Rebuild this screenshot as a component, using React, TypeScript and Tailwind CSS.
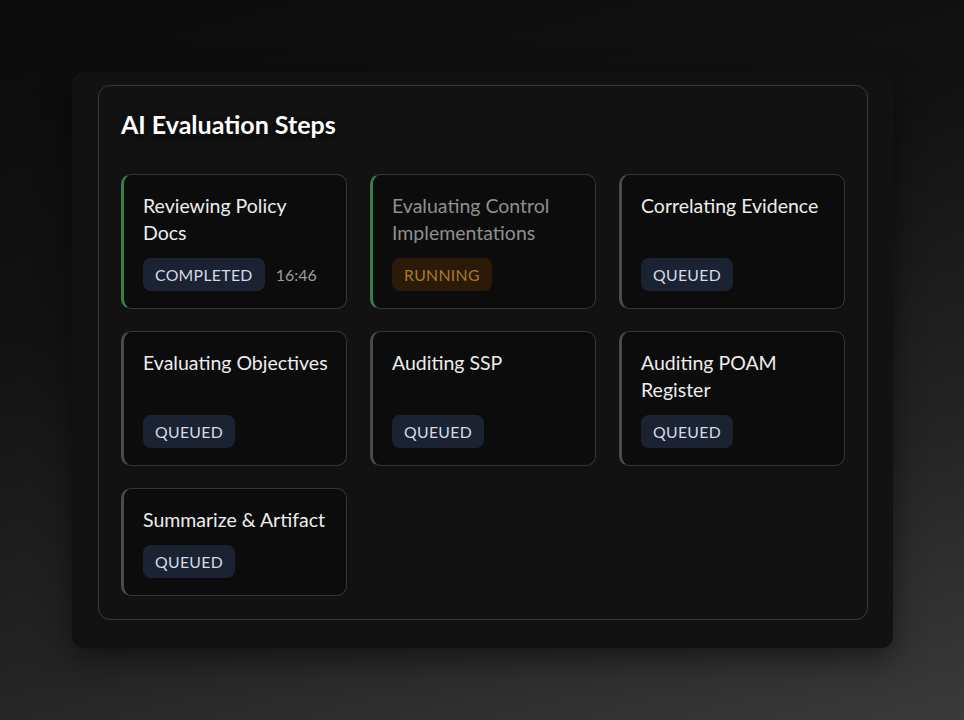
type Status = 'completed' | 'running' | 'queued'

interface Step {
  title: string
  status: Status
  time?: string
}

const steps: Step[] = [
  { title: 'Reviewing Policy Docs', status: 'completed', time: '16:46' },
  { title: 'Evaluating Control Implementations', status: 'running' },
  { title: 'Correlating Evidence', status: 'queued' },
  { title: 'Evaluating Objectives', status: 'queued' },
  { title: 'Auditing SSP', status: 'queued' },
  { title: 'Auditing POAM Register', status: 'queued' },
  { title: 'Summarize & Artifact', status: 'queued' },
]

const accentMap: Record<Status, string> = {
  completed: 'border-l-[#3b7d47]',
  running: 'border-l-[#3b7d47]',
  queued: 'border-l-[#4a4a4a]',
}

const badgeMap: Record<Status, string> = {
  completed: 'bg-[#1b2232] text-[#d3dae8]',
  running: 'bg-[#2a1a07] text-[#a97c22]',
  queued: 'bg-[#1b2232] text-[#d3dae8]',
}

function StepCard({ step }: { step: Step }) {
  const running = step.status === 'running'
  return (
    <div
      className={`flex flex-col rounded-[10px] border border-[#363636] border-l-[3px] ${accentMap[step.status]} bg-[#0c0c0c] pt-[17px] pb-[17px] pl-[19px] pr-[16px]`}
    >
      <div className={`text-[19.5px] leading-[27px] ${running ? 'text-[#8f8f8f]' : 'text-[#ededed]'}`}>
        {step.title}
      </div>
      <div className="mt-auto pt-[12px] flex items-center gap-[11px]">
        <span
          className={`inline-flex h-[33px] items-center rounded-lg px-[12px] text-[15.8px] uppercase tracking-[0.02em] ${badgeMap[step.status]}`}
        >
          {step.status}
        </span>
        {step.time && <span className="text-[16px] text-[#9c9c9c]">{step.time}</span>}
      </div>
    </div>
  )
}

export default function App() {
  return (
    <div
      className="min-h-[720px] w-full bg-[linear-gradient(165deg,#0b0b0b_0%,#121212_35%,#242424_70%,#3a3a3a_100%)] pt-[72px] pl-[72px] font-['Lato',sans-serif]"
    >
      <div className="w-[821px] h-[576px] rounded-[12px] bg-[#121212] pt-[13px] pl-[26px] pr-[25px] pb-[28px] shadow-[0_10px_30px_rgba(0,0,0,0.5)]">
        <div className="h-[535px] rounded-[12px] border border-[#3a3a3a] bg-[#121212] px-[22px] pt-[23px] pb-[24px]">
          <h2 className="text-[25px] leading-[30px] font-bold text-white [text-shadow:0_2px_6px_rgba(0,0,0,0.6)]">
            AI Evaluation Steps
          </h2>
          <div className="mt-[35px] grid grid-cols-3 gap-x-[23px] gap-y-[22px]">
            {steps.map((s) => (
              <StepCard key={s.title} step={s} />
            ))}
          </div>
        </div>
      </div>
    </div>
  )
}
